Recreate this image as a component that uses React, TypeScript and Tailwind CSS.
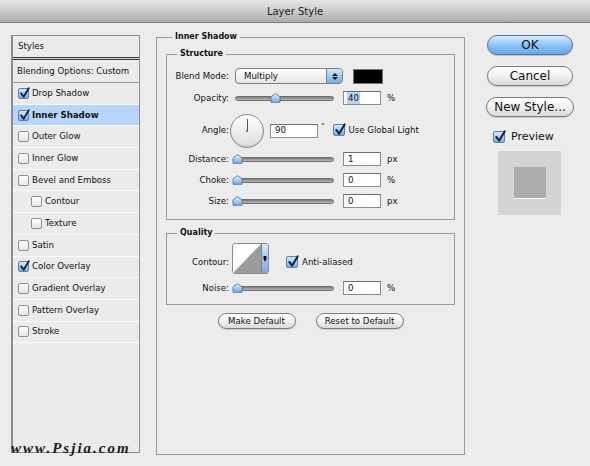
import React from 'react';

const font = "font-['DejaVu_Sans','Liberation_Sans',sans-serif]";

const Check = ({ checked, size = 11 }: { checked: boolean; size?: number }) => (
  <span
    className={`relative inline-block shrink-0 rounded-[2px] border ${
      checked
        ? 'border-[#5d7fa8] bg-gradient-to-b from-[#d6e8fb] to-[#79b0e6]'
        : 'border-[#8f8f8f] bg-gradient-to-b from-[#ffffff] to-[#e6e6e6]'
    }`}
    style={{ width: size, height: size }}
  >
    {checked && (
      <svg className="absolute -top-[2px] left-[0px]" width={size} height={size + 1} viewBox="0 0 13 14">
        <path d="M2.5 7.5 L5.5 11.5 L11.5 1.5" fill="none" stroke="#14243a" strokeWidth="2.2" strokeLinecap="round" strokeLinejoin="round" />
      </svg>
    )}
  </span>
);

const Thumb = () => (
  <svg width="11" height="10" viewBox="0 0 11 10">
    <defs>
      <linearGradient id="tg" x1="0" y1="0" x2="0" y2="1">
        <stop offset="0" stopColor="#e3f0fc" />
        <stop offset="1" stopColor="#74acE4" />
      </linearGradient>
    </defs>
    <path d="M1 4.5 Q1 3.5 2 3 L5.5 0.7 L9 3 Q10 3.5 10 4.5 L10 9.3 L1 9.3 Z" fill="url(#tg)" stroke="#4f7aa8" strokeWidth="0.9" />
  </svg>
);

const Slider = ({ pos }: { pos: number }) => (
  <div className="relative ml-[6px] h-[14px] w-[99px]">
    <div className="absolute left-0 right-0 top-[5px] h-[5px] rounded-full border border-[#6f6f6f] bg-gradient-to-b from-[#7b7b7b] to-[#b9b9b9]" />
    <div className="absolute top-[2px]" style={{ left: pos }}>
      <Thumb />
    </div>
  </div>
);

const Field = ({ value, w = 38, selected = false }: { value: string; w?: number; selected?: boolean }) => (
  <div
    className="flex h-[14px] items-center border border-[#8c8c8c] border-t-[#6e6e6e] bg-white pl-[3px] text-[8.6px] text-[#111]"
    style={{ width: w }}
  >
    <span className={selected ? 'bg-[#b5d4f5] px-[1px]' : 'px-[1px]'}>{value}</span>
  </div>
);

const Label = ({ children }: { children: React.ReactNode }) => (
  <div className="w-[62px] shrink-0 text-right text-[8.6px] text-[#111]">{children}</div>
);

const SliderRow = ({ label, value, unit, pos, mt = 'mt-[7px]', selected = false }: { label: string; value: string; unit: string; pos: number; mt?: string; selected?: boolean }) => (
  <div className={`${mt} flex h-[14px] items-center`}>
    <Label>{label}</Label>
    <Slider pos={pos} />
    <div className="ml-[9px]">
      <Field value={value} selected={selected} />
    </div>
    <span className="ml-[6px] text-[8.6px] text-[#111]">{unit}</span>
  </div>
);

const styleRows = [
  { name: 'Drop Shadow', checked: true },
  { name: 'Inner Shadow', checked: true, active: true },
  { name: 'Outer Glow', checked: false },
  { name: 'Inner Glow', checked: false },
  { name: 'Bevel and Emboss', checked: false },
  { name: 'Contour', checked: false, indent: true },
  { name: 'Texture', checked: false, indent: true },
  { name: 'Satin', checked: false },
  { name: 'Color Overlay', checked: true },
  { name: 'Gradient Overlay', checked: false },
  { name: 'Pattern Overlay', checked: false },
  { name: 'Stroke', checked: false },
];

const RoundButton = ({ children, className = '' }: { children: React.ReactNode; className?: string }) => (
  <div
    className={`flex items-center justify-center rounded-full border border-[#7d7d7d] bg-gradient-to-b from-[#ffffff] via-[#f2f2f2] to-[#d9d9d9] text-[#111] shadow-[0_1px_1px_rgba(0,0,0,0.15)] ${className}`}
  >
    {children}
  </div>
);

export default function App() {
  return (
    <div className={`relative h-[466px] w-[590px] overflow-hidden bg-[#ececec] ${font}`}>
      {/* title bar */}
      <div className="flex h-[23px] items-center justify-center border-b border-[#7b7b7b] bg-gradient-to-b from-[#e6e6e6] via-[#cbcbcb] to-[#ababab] text-[10px] text-[#1a1a1a]">
        Layer Style
      </div>

      <div className="flex">
        {/* styles list */}
        <div className="ml-[11px] mt-[12px] h-[418px] w-[129px] border border-l-2 border-[#8d8d8d] bg-[#ebebeb] text-[8.6px] text-[#111]">
          <div className="flex h-[21px] items-center pl-[5px]">Styles</div>
          <div className="h-[3px] border-y border-[#3a3a3a] bg-[#cfcfcf]" />
          <div className="flex h-[23px] items-center border-b border-[#9a9a9a] pl-[4px]">Blending Options: Custom</div>
          {styleRows.map((r) => (
            <div
              key={r.name}
              className={`flex h-[21.7px] items-center gap-[3px] border-b border-[#fbfbfb] ${r.indent ? 'pl-[18px]' : 'pl-[5px]'} ${
                r.active ? 'bg-[#b7d6fb] font-bold' : ''
              }`}
            >
              <Check checked={r.checked} />
              <span>{r.name}</span>
            </div>
          ))}
        </div>

        {/* main options */}
        <fieldset className="ml-[16px] mt-[8px] h-[424px] w-[309px] border border-[#9a9a9a] px-[9px]">
          <legend className="ml-[6px] px-[3px] text-[8px] font-bold leading-[12px] text-[#111]">Inner Shadow</legend>

          <fieldset className="mt-[5px] border border-[#9a9a9a] pb-[11px]">
            <legend className="ml-[10px] px-[3px] text-[8px] font-bold leading-[12px] text-[#111]">Structure</legend>

            <div className="mt-[8px] flex h-[16px] items-center">
              <Label>Blend Mode:</Label>
              <div className="ml-[6px] flex h-[16px] w-[108px] overflow-hidden rounded-[4px] border border-[#7f7f7f] bg-gradient-to-b from-[#ffffff] to-[#e4e4e4]">
                <span className="flex-1 pl-[8px] text-[8.6px] leading-[14px] text-[#111]">Multiply</span>
                <div className="flex w-[16px] flex-col items-center justify-center gap-[1px] border-l border-[#7f7f7f] bg-gradient-to-b from-[#d3e7fb] to-[#74abe2]">
                  <svg width="6" height="3" viewBox="0 0 6 3"><path d="M0 3 L3 0 L6 3 Z" fill="#1b1b1b" /></svg>
                  <svg width="6" height="3" viewBox="0 0 6 3"><path d="M0 0 L3 3 L6 0 Z" fill="#1b1b1b" /></svg>
                </div>
              </div>
              <div className="ml-[10px] h-[15px] w-[30px] border border-[#777] bg-black" />
            </div>

            <SliderRow label="Opacity:" value="40" unit="%" pos={35} selected />

            <div className="mt-[8px] flex h-[35px] items-center">
              <Label>Angle:</Label>
              <div className="relative ml-[1px] h-[34px] w-[34px] rounded-full border border-[#8a8a8a] bg-gradient-to-b from-[#ffffff] to-[#dedede] shadow-[inset_0_-1px_2px_rgba(0,0,0,0.12)]">
                <div className="absolute left-[16px] top-[4px] h-[12px] w-[1px] bg-[#555]" />
                <div className="absolute left-[15px] top-[15px] h-[2px] w-[2px] rounded-full bg-[#555]" />
              </div>
              <div className="ml-[6px]">
                <Field value="90" w={48} />
              </div>
              <span className="ml-[3px] self-start pt-[8px] text-[7px] text-[#333]">°</span>
              <div className="ml-[8px] flex items-center gap-[4px]">
                <Check checked size={12} />
                <span className="text-[8.6px] text-[#111]">Use Global Light</span>
              </div>
            </div>

            <SliderRow label="Distance:" value="1" unit="px" pos={-3} mt="mt-[4px]" />
            <SliderRow label="Choke:" value="0" unit="%" pos={-3} />
            <SliderRow label="Size:" value="0" unit="px" pos={-3} />
          </fieldset>

          <fieldset className="mt-[7px] border border-[#9a9a9a] pb-[9px]">
            <legend className="ml-[10px] px-[3px] text-[8px] font-bold leading-[12px] text-[#111]">Quality</legend>

            <div className="mt-[4px] flex h-[31px] items-center">
              <div className="pt-[8px]">
                <Label>Contour:</Label>
              </div>
              <div className="ml-[3px] flex h-[31px] w-[37px] overflow-hidden rounded-[3px] border border-[#8a8a8a]">
                <svg width="28" height="29" viewBox="0 0 28 29" className="shrink-0">
                  <rect width="28" height="29" fill="#ffffff" />
                  <path d="M0 29 L28 0 L28 29 Z" fill="#9b9b9b" />
                </svg>
                <div className="flex flex-1 items-center justify-center border-l border-[#7f7f7f] bg-gradient-to-b from-[#d3e7fb] to-[#74abe2]">
                  <svg width="4" height="6" viewBox="0 0 4 6"><path d="M0.5 0 H3.5 V3 L2 6 L0.5 3 Z" fill="#111" /></svg>
                </div>
              </div>
              <div className="ml-[17px] flex items-center gap-[4px] pt-[8px]">
                <Check checked size={12} />
                <span className="text-[8.6px] text-[#111]">Anti-aliased</span>
              </div>
            </div>

            <SliderRow label="Noise:" value="0" unit="%" pos={-3} />
          </fieldset>

          <div className="mt-[8px] flex justify-center gap-[20px]">
            <RoundButton className="h-[16px] w-[78px] text-[8.6px]">Make Default</RoundButton>
            <RoundButton className="h-[16px] w-[88px] text-[8.6px]">Reset to Default</RoundButton>
          </div>
        </fieldset>

        {/* buttons + preview */}
        <div className="ml-[22px] mt-[12px] flex flex-col">
          <div className="flex h-[20px] w-[86px] items-center justify-center rounded-full border border-[#4f76a6] bg-gradient-to-b from-[#d5eafd] via-[#8fc2f3] to-[#66a9ec] text-[12px] text-[#111] shadow-[0_1px_1px_rgba(0,0,0,0.2)]">
            OK
          </div>
          <RoundButton className="mt-[11px] h-[20px] w-[86px] text-[12px]">Cancel</RoundButton>
          <RoundButton className="-ml-[1px] mt-[11px] h-[20px] w-[88px] text-[12px]">New Style...</RoundButton>
          <div className="ml-[6px] mt-[12px] flex items-center gap-[6px]">
            <Check checked size={12} />
            <span className="text-[11px] text-[#111]">Preview</span>
          </div>
          <div className="ml-[11px] mt-[5px] flex h-[64px] w-[63px] items-center justify-center bg-[#d4d4d4]">
            <div className="h-[32px] w-[32px] border-b border-white bg-[#acacac]" />
          </div>
        </div>
      </div>

      {/* watermark */}
      <div className="absolute left-[11px] top-[440px] font-['Liberation_Serif',serif] text-[15px] font-bold italic leading-[16px] tracking-[2px] text-[#1a1a1a]">
        www.Psjia.com
      </div>
    </div>
  );
}
